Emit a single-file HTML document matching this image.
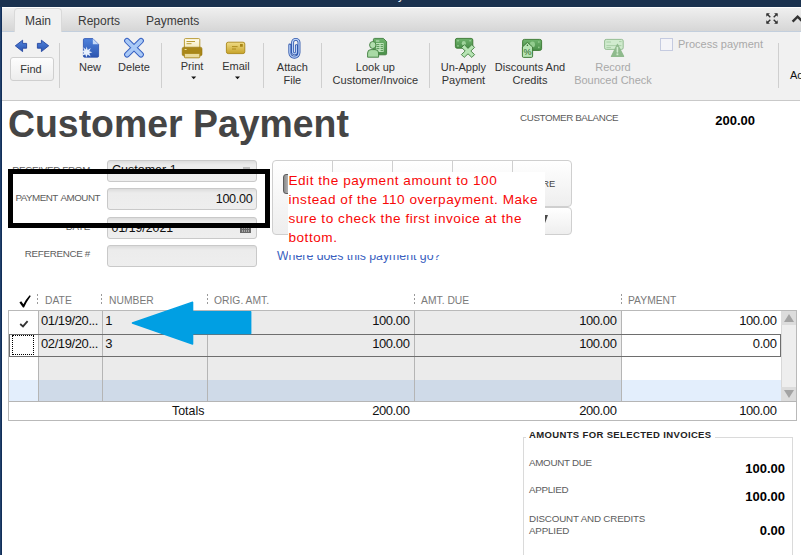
<!DOCTYPE html>
<html>
<head>
<meta charset="utf-8">
<title>Customer Payment</title>
<style>
html,body{margin:0;padding:0;}
body{width:801px;height:555px;overflow:hidden;background:#fff;position:relative;font-family:"Liberation Sans",sans-serif;color:#222;}
.abs{position:absolute;}
#topbar{left:0;top:0;width:801px;height:7px;background:#1b324f;}
#leftbar{left:0;top:7px;width:2px;height:548px;background:linear-gradient(90deg,#21406b 0,#21406b 1px,#112e58 1px);}
#tabbar{left:2px;top:7px;width:799px;height:23px;background:linear-gradient(#efefef,#d6d6d6);border-top:1px solid #fff;border-bottom:1px solid #c3cfdd;}
#tabmain{left:14px;top:8px;width:48px;height:24px;background:#f1f1f1;border:1px solid #d9d9d9;border-bottom:none;border-radius:4px 4px 0 0;box-sizing:border-box;}
.tab{top:14px;font-size:12px;color:#3a3a3a;line-height:14px;}
#toolbar{left:2px;top:32px;width:798px;height:68px;background:#f1f1f1;border-bottom:1px solid #c9c9c9;}
.tl{font-size:11px;line-height:13px;color:#333;text-align:center;white-space:nowrap;}
.tl.dis{color:#a9a9a9;}
.sep{width:1px;background:#cfcfcf;top:43px;height:45px;}
#find{left:10px;top:57px;width:44px;height:24px;box-sizing:border-box;border:1px solid #cfcfcf;border-radius:3px;background:linear-gradient(#fdfdfd,#ededed);font-size:11px;line-height:23px;text-align:center;color:#333;padding-right:2px;}
#title{left:7.6px;top:100.6px;font-size:38.8px;line-height:46px;font-weight:bold;color:#454545;white-space:nowrap;transform:scaleX(0.964);transform-origin:0 0;}
.lbl{font-size:9.8px;letter-spacing:-0.3px;color:#5c5c5c;line-height:11px;white-space:nowrap;}
.field{left:107px;width:150px;height:22px;box-sizing:border-box;border:1px solid #c9c9c9;border-radius:3px;background:linear-gradient(#dcdcdc 0,#ececec 4px,#eeeeee);font-size:12px;line-height:20px;color:#111;}
.pmb{box-sizing:border-box;border:1px solid #cfcfcf;background:linear-gradient(#ffffff,#eeeeee);}
#note{left:288px;top:172px;width:257px;height:83px;background:#fff;color:#f80808;font-size:13.6px;line-height:18.9px;letter-spacing:0.54px;white-space:nowrap;padding-left:0.4px;box-sizing:border-box;}
.th{top:295px;font-size:10.3px;letter-spacing:0.02px;line-height:12px;color:#7a7a7a;white-space:nowrap;}
.dots{top:294px;height:10px;width:1px;background:repeating-linear-gradient(#9a9a9a 0,#9a9a9a 2px,transparent 2px,transparent 4px);}
.cell{font-size:13px;line-height:15px;color:#111;white-space:nowrap;letter-spacing:-0.4px;}
.num{text-align:right;}
.bnum{font-size:13px;font-weight:bold;color:#000;text-align:right;white-space:nowrap;line-height:15px;transform-origin:100% 50%;}
</style>
</head>
<body>
<div class="abs" id="topbar"></div>
<div class="abs" style="left:398px;top:-11.3px;font-size:12px;line-height:12px;color:#e8eef6;">y</div>
<div class="abs" id="tabbar"></div>
<div class="abs" id="tabmain"></div>
<div class="abs tab" style="left:25px;">Main</div>
<div class="abs tab" style="left:78px;">Reports</div>
<div class="abs tab" style="left:146px;">Payments</div>
<div class="abs" id="toolbar"></div>
<div class="abs" id="leftbar"></div>

<!-- toolbar content -->
<div class="abs" id="find">Find</div>
<div class="abs sep" style="left:59px;"></div>
<div class="abs tl" style="left:70px;top:61px;width:40px;">New</div>
<div class="abs tl" style="left:114px;top:61px;width:40px;">Delete</div>
<div class="abs sep" style="left:161px;"></div>
<div class="abs tl" style="left:172px;top:60px;width:40px;">Print</div>
<div class="abs tl" style="left:216px;top:60px;width:40px;">Email</div>
<div class="abs sep" style="left:263px;"></div>
<div class="abs tl" style="left:267.4px;top:61px;width:50px;">Attach<br>File</div>
<div class="abs sep" style="left:321px;"></div>
<div class="abs tl" style="left:325.4px;top:61px;width:100px;">Look up<br>Customer/Invoice</div>
<div class="abs sep" style="left:429px;"></div>
<div class="abs tl" style="left:433.4px;top:61px;width:60px;">Un-Apply<br>Payment</div>
<div class="abs tl" style="left:490px;top:61px;width:80px;">Discounts And<br>Credits</div>
<div class="abs tl dis" style="left:568px;top:61px;width:90px;">Record<br>Bounced Check</div>
<div class="abs" style="left:660px;top:38px;width:11px;height:11px;border:1px solid #c5cbe0;background:#f4f4f8;box-sizing:content-box;"></div>
<div class="abs tl dis" style="left:678px;top:38px;font-size:11px;">Process payment</div>
<div class="abs sep" style="left:778px;"></div>
<div class="abs tl" style="left:790px;top:69px;color:#111;">Ac</div>

<!-- icons -->
<svg class="abs" style="left:0;top:0;" width="801" height="100" viewBox="0 0 801 100">
<defs>
<linearGradient id="gb" x1="0" y1="0" x2="0" y2="1"><stop offset="0" stop-color="#4f82dc"/><stop offset="1" stop-color="#2c55b0"/></linearGradient>
<linearGradient id="gg" x1="0" y1="0" x2="0" y2="1"><stop offset="0" stop-color="#6fb36d"/><stop offset="1" stop-color="#4a8f49"/></linearGradient>
<linearGradient id="gy" x1="0" y1="0" x2="0" y2="1"><stop offset="0" stop-color="#f0dc86"/><stop offset="1" stop-color="#c7a329"/></linearGradient>
<linearGradient id="gp" x1="0" y1="0" x2="0" y2="1"><stop offset="0" stop-color="#fffdf0"/><stop offset="1" stop-color="#f3e6b0"/></linearGradient>
</defs>
<!-- fullscreen + chevron -->
<g stroke="#333" stroke-width="1.4" fill="#333">
<path d="M770.3 17.2 L767 13.9 M773.7 17.2 L777 13.9 M770.3 19.8 L767 23.1 M773.7 19.8 L777 23.1" fill="none"/>
<path d="M766.3 13.2 h3.6 l-3.6 3.6z M777.7 13.2 h-3.6 l3.6 3.6z M766.3 23.8 h3.6 l-3.6 -3.6z M777.7 23.8 h-3.6 l3.6 -3.6z" stroke="none"/>
</g>
<path d="M792.6 21.6 L797.6 16.6 L802.6 21.6" fill="none" stroke="#333" stroke-width="2.4"/>
<!-- nav arrows -->
<path d="M15.3 45.8 L22.6 40.2 V43.4 H26.6 V48.2 H22.6 V51.6 Z" fill="url(#gb)" stroke="#2446a0" stroke-width="0.9" stroke-linejoin="round"/>
<path d="M48.7 45.8 L41.4 40.2 V43.4 H37.4 V48.2 H41.4 V51.6 Z" fill="url(#gb)" stroke="#2446a0" stroke-width="0.9" stroke-linejoin="round"/>
<!-- new -->
<path d="M84.6 38.6 H92.8 L98.6 44.4 V56 Q98.6 57.2 97.4 57.2 H84.6 Q83.4 57.2 83.4 56 V39.8 Q83.4 38.6 84.6 38.6 Z" fill="url(#gb)" stroke="#2a4fae" stroke-width="0.8"/>
<path d="M92.8 38.8 V44.2 H98.4 Z" fill="#c6daf8"/>
<path d="M86.6 46.4 L87.7 50 L90.8 48 L89.3 51.2 L92.4 52.2 L89.3 53.2 L90.6 56.6 L87.6 54.6 L86.2 57.6 L85.4 54.4 L82 55.6 L84 52.8 L81.4 51 L84.4 50.4 L83.2 47.2 L85.9 49.6 Z" fill="#e6effc"/>
<!-- delete -->
<path d="M127 40.8 L141 54.6 M141 40.8 L127 54.6" fill="none" stroke="#3761c2" stroke-width="5.8" stroke-linecap="round"/>
<path d="M127 40.8 L141 54.6 M141 40.8 L127 54.6" fill="none" stroke="#a9c9f6" stroke-width="3.8" stroke-linecap="round"/>
<!-- print -->
<rect x="184.4" y="38.6" width="15.4" height="11" rx="1" fill="url(#gp)" stroke="#b39222" stroke-width="0.9"/>
<path d="M186.5 41.5 h8.5 M186.5 43.7 h5" stroke="#b39222" stroke-width="0.9"/>
<rect x="182.2" y="47.2" width="19.8" height="8.6" rx="1.6" fill="#a98718" stroke="#98770f" stroke-width="0.6"/>
<rect x="184.6" y="49" width="2" height="0.9" fill="#f3e6b0"/>
<rect x="184.4" y="53.4" width="15.4" height="4.4" rx="0.8" fill="#eadb9c" stroke="#a98718" stroke-width="0.9"/>
<path d="M191.2 76.4 h5 l-2.5 2.8z" fill="#111"/>
<!-- email -->
<rect x="226.4" y="42.2" width="18.4" height="11.4" rx="1.8" fill="url(#gy)" stroke="#a98718" stroke-width="0.9"/>
<rect x="240" y="44" width="2.8" height="2.8" fill="#a98718"/>
<path d="M232 46.6 h5.6 M232 49 h4" stroke="#a98718" stroke-width="0.9"/>
<path d="M235 76.4 h5 l-2.5 2.8z" fill="#111"/>
<!-- attach -->
<path d="M289.8 45 V52.6 A4.6 4.6 0 0 0 299 52.6 V42.6 A3.2 3.2 0 0 0 292.6 42.6 V52 A1.9 1.9 0 0 0 296.4 52 V45.6" fill="none" stroke="#2e56ab" stroke-width="2.9" stroke-linecap="round"/>
<path d="M289.8 45 V52.6 A4.6 4.6 0 0 0 299 52.6 V42.6 A3.2 3.2 0 0 0 292.6 42.6 V52 A1.9 1.9 0 0 0 296.4 52 V45.6" fill="none" stroke="#b9d1f8" stroke-width="1.25" stroke-linecap="round"/>
<!-- look up -->
<path d="M374.6 38.4 H383.4 L386.6 41.6 V53.6 Q386.6 54.8 385.4 54.8 H374.6 Q373.4 54.8 373.4 53.6 V39.6 Q373.4 38.4 374.6 38.4 Z" fill="url(#gg)" stroke="#3f7d3d" stroke-width="0.9"/>
<rect x="376" y="43" width="7.6" height="9" fill="#bfe4bb"/>
<path d="M376.4 44.6 h3 M380.6 44.6 h2.4 M376.4 46.6 h3 M380.6 46.6 h2.4 M376.4 48.6 h3 M380.6 48.6 h2.4 M380.6 50.6 h2.4" stroke="#4a8f49" stroke-width="0.9"/>
<path d="M376 41 h3.4" stroke="#d6efd3" stroke-width="0.9"/>
<ellipse cx="372.8" cy="45" rx="3.2" ry="3.5" fill="#b2dfae" stroke="#3f7d3d" stroke-width="0.9"/>
<path d="M367.6 57.2 V53 Q367.6 49.6 371 49.6 H375 Q378.6 49.6 378.6 53 V57.2 Z" fill="#a9daa5" stroke="#3f7d3d" stroke-width="0.9" stroke-linejoin="round"/>
<!-- un-apply -->
<rect x="455.4" y="38.4" width="17.4" height="9.8" rx="1.6" fill="url(#gg)" stroke="#38762f" stroke-width="0.9"/>
<ellipse cx="463.8" cy="43.3" rx="2" ry="2.4" fill="#9fd39b"/>
<rect x="457.3" y="40" width="1.4" height="1.4" fill="#9fd39b"/><rect x="469.4" y="40" width="1.4" height="1.4" fill="#9fd39b"/><rect x="457.3" y="45.2" width="1.4" height="1.4" fill="#9fd39b"/>
<path d="M464.4 44.6 L468 48.4 L471.8 44.6 L474.6 47.4 L470.8 51 L474.6 54.6 L471.8 57.4 L468 53.8 L464.2 57.4 L461.4 54.6 L465.2 51 L461.6 47.4 Z" fill="#b7e4b4" stroke="#3f7d3d" stroke-width="0.9" stroke-linejoin="round"/>
<!-- discounts -->
<rect x="522.6" y="39.4" width="19" height="11" rx="1.8" fill="url(#gg)" stroke="#38762f" stroke-width="0.9"/>
<ellipse cx="532.4" cy="44.6" rx="2.6" ry="3" fill="#93cc8f"/>
<rect x="538" y="41.2" width="1.6" height="1.6" fill="#8cc688"/><rect x="538" y="46.6" width="1.6" height="1.6" fill="#8cc688"/>
<path d="M527.4 42.4 L532.6 47 V56.2 Q532.6 57.4 531.4 57.4 H523.6 Q522.4 57.4 522.4 56.2 V47 Z" fill="#b7e4b4" stroke="#35722f" stroke-width="0.9" stroke-linejoin="round"/>
<circle cx="527.4" cy="45.2" r="0.8" fill="#2f6a2b"/>
<text x="523.4" y="55.4" font-family="Liberation Sans, sans-serif" font-size="9" fill="#2a5f27">%</text>
<!-- record bounced -->
<rect x="604.6" y="39.4" width="18.6" height="10" rx="1.6" fill="#d0ebce" stroke="#8db88b" stroke-width="0.9"/>
<path d="M606.4 42 h4.6 M606.4 45.6 h15 M606.4 47.6 h4.6 M619 41.6 h2.6" stroke="#a5cda3" stroke-width="0.9"/>
<path d="M617.4 44.4 L623.6 56.4 H611.4 Z" fill="#8fba8d" stroke="#8fba8d" stroke-width="1.2" stroke-linejoin="round"/>
<path d="M617.4 47.6 V52" stroke="#d0ebce" stroke-width="1.6" stroke-linecap="round"/>
<rect x="616.5" y="53.4" width="1.8" height="1.8" fill="#d0ebce"/>
</svg>

<!-- title -->
<div class="abs" id="title">Customer Payment</div>
<div class="abs lbl" style="left:520px;top:112px;letter-spacing:-0.38px;">CUSTOMER BALANCE</div>
<div class="abs bnum" style="left:700px;top:113px;width:55px;">200.00</div>

<!-- form -->
<div class="abs lbl" style="left:0;width:90px;text-align:right;top:164px;">RECEIVED FROM</div>
<div class="abs field" style="top:160px;padding-left:4px;font-size:12.5px;line-height:18.6px;">Customer 1</div>
<div class="abs lbl" style="left:0;width:90px;text-align:right;top:221px;">DATE</div>
<div class="abs field" style="top:217px;padding-left:3.6px;font-size:12.3px;line-height:21px;">01/19/2021</div>
<div class="abs" style="left:240px;top:223px;width:11px;height:10px;background:#6a6a6a;"></div><div class="abs" style="left:241px;top:227px;width:9px;height:5px;background:repeating-linear-gradient(90deg,#6a6a6a 0,#6a6a6a 1px,#a8a8a8 1px,#a8a8a8 2px);"></div><div class="abs" style="left:240px;top:229px;width:11px;height:1px;background:#6a6a6a;"></div>
<div class="abs lbl" style="left:0;width:90px;text-align:right;top:248px;">REFERENCE #</div>
<div class="abs field" style="top:245px;"></div>

<!-- payment method buttons -->
<div class="abs pmb" style="left:272px;top:160px;width:61px;height:75px;border-radius:4px 0 0 4px;"></div>
<div class="abs pmb" style="left:332px;top:160px;width:61px;height:48px;"></div>
<div class="abs pmb" style="left:392px;top:160px;width:61px;height:48px;"></div>
<div class="abs pmb" style="left:452px;top:160px;width:61px;height:48px;"></div>
<div class="abs pmb" style="left:512px;top:160px;width:60px;height:47px;border-radius:0 4px 4px 0;"></div>
<div class="abs pmb" style="left:332px;top:207px;width:240px;height:28px;border-radius:0 4px 4px 0;"></div>
<div class="abs" style="left:283px;top:174px;width:9px;height:19.5px;box-sizing:border-box;border:1px solid #5e5e5e;border-radius:3px;background:linear-gradient(90deg,#8a8a8a,#d0d0d0);"></div>
<div class="abs" style="left:527.2px;top:177.5px;font-size:9.4px;color:#444;line-height:11px;white-space:nowrap;">MORE</div>
<div class="abs" style="left:540.2px;top:214.5px;width:0;height:0;border-left:4.4px solid transparent;border-right:4.4px solid transparent;border-top:11.5px solid #4a4a4a;"></div>
<div class="abs" style="left:277px;top:248.5px;font-size:12.3px;line-height:14px;color:#3a5fc0;white-space:nowrap;">Where does this payment go?</div>

<!-- black highlight rectangle -->
<div class="abs" style="left:243px;top:167.4px;width:7px;height:2px;background:#bdbdbd;"></div>
<div class="abs" style="left:8px;top:169px;width:262px;height:58.5px;box-sizing:border-box;border:5px solid #000;"></div>
<div class="abs lbl" style="left:0;width:100px;text-align:right;top:192px;letter-spacing:-0.5px;word-spacing:1.2px;">PAYMENT AMOUNT</div>
<div class="abs field num" style="top:188px;padding-right:3.6px;font-size:12.6px;letter-spacing:-0.3px;">100.00</div>

<!-- note -->
<div class="abs" id="note">Edit the payment amount to 100<br>instead of the 110 overpayment. Make<br>sure to check the first invoice at the<br>bottom.</div>

<!-- table header -->
<svg class="abs" style="left:15px;top:290px;" width="20" height="20" viewBox="15 290 20 20"><path d="M19.4 302.6 L21.2 301.2 L23.4 304.2 Q26 299.2 29.6 295.2 L30.8 296 Q26.8 301.4 24 307.6 L23 307.6 Z" fill="#000"/></svg>
<div class="abs dots" style="left:37px;"></div>
<div class="abs th" style="left:45px;">DATE</div>
<div class="abs dots" style="left:101px;"></div>
<div class="abs th" style="left:109px;">NUMBER</div>
<div class="abs dots" style="left:207px;"></div>
<div class="abs th" style="left:214px;">ORIG. AMT.</div>
<div class="abs dots" style="left:414px;"></div>
<div class="abs th" style="left:421px;">AMT. DUE</div>
<div class="abs dots" style="left:621px;"></div>
<div class="abs th" style="left:628px;">PAYMENT</div>

<!-- table body -->
<div class="abs" style="left:8px;top:310px;width:789px;height:111px;box-sizing:border-box;border:1px solid #b9b9b9;background:#fff;"></div>
<div class="abs" style="left:38px;top:311px;width:583px;height:69px;background:#ebebeb;"></div>
<div class="abs" style="left:9px;top:380px;width:772px;height:21px;background:#e3eefc;"></div>
<div class="abs" style="left:38px;top:380px;width:583px;height:21px;background:#cfdae8;"></div>
<div class="abs" style="left:38px;top:311px;width:1px;height:90px;background:#b5b5b5;"></div>
<div class="abs" style="left:102px;top:311px;width:1px;height:90px;background:#b5b5b5;"></div>
<div class="abs" style="left:207px;top:311px;width:1px;height:90px;background:#b5b5b5;"></div>
<div class="abs" style="left:414px;top:311px;width:1px;height:90px;background:#b5b5b5;"></div>
<div class="abs" style="left:621px;top:311px;width:1px;height:90px;background:#b5b5b5;"></div>
<div class="abs" style="left:9px;top:401px;width:788px;height:1px;background:#b5b5b5;"></div>
<!-- scrollbar -->
<div class="abs" style="left:781px;top:311px;width:15px;height:90px;background:#eeeeee;border-left:1px solid #d8d8d8;box-sizing:border-box;"></div>
<div class="abs" style="left:781px;top:311px;width:15px;height:14px;background:#dcdcdc;"></div>
<div class="abs" style="left:781px;top:387px;width:15px;height:14px;background:#dcdcdc;"></div>
<div class="abs" style="left:784px;top:314px;width:0;height:0;border-left:5px solid transparent;border-right:5px solid transparent;border-bottom:8px solid #a3a3a3;"></div>
<div class="abs" style="left:784px;top:390px;width:0;height:0;border-left:5px solid transparent;border-right:5px solid transparent;border-top:8px solid #a3a3a3;"></div>
<!-- row2 selection -->
<div class="abs" style="left:9px;top:334px;width:772px;height:23px;box-sizing:border-box;border:1px solid #6e6e6e;"></div>
<div class="abs" style="left:621px;top:335px;width:159px;height:21px;background:#fff;border-left:1px solid #b5b5b5;box-sizing:border-box;"></div>
<div class="abs" style="left:12px;top:335px;width:22px;height:20px;box-sizing:border-box;border:1px dotted #000;background:#fff;"></div>
<!-- row text -->
<svg class="abs" style="left:15px;top:315px;" width="20" height="16" viewBox="15 315 20 16"><path d="M20.2 324 L23 326.4 L27.6 321.2" fill="none" stroke="#333" stroke-width="1.8"/></svg>
<div class="abs cell" style="left:41px;top:313px;">01/19/20...</div>
<div class="abs cell" style="left:105.3px;top:313px;">1</div>
<div class="abs cell num" style="left:300px;width:109.5px;top:313px;">100.00</div>
<div class="abs cell num" style="left:507px;width:109.5px;top:313px;">100.00</div>
<div class="abs cell num" style="left:667px;width:109.5px;top:313px;">100.00</div>
<div class="abs cell" style="left:41px;top:336px;">02/19/20...</div>
<div class="abs cell" style="left:105.3px;top:336px;">3</div>
<div class="abs cell num" style="left:300px;width:109.5px;top:336px;">100.00</div>
<div class="abs cell num" style="left:507px;width:109.5px;top:336px;">100.00</div>
<div class="abs cell num" style="left:667px;width:109.5px;top:336px;">0.00</div>
<div class="abs cell" style="left:172px;top:404px;font-size:12.4px;letter-spacing:0;">Totals</div>
<div class="abs cell num" style="left:300px;width:109.5px;top:403px;">200.00</div>
<div class="abs cell num" style="left:507px;width:109.5px;top:403px;">200.00</div>
<div class="abs cell num" style="left:667px;width:109.5px;top:403px;">100.00</div>

<!-- arrow -->
<svg class="abs" style="left:125px;top:296px;" width="135" height="55" viewBox="125 296 135 55">
<polygon points="132.4,323 192.6,302.2 192.6,311.7 250.7,311.7 250.7,333.6 192.6,333.6 192.6,344" fill="#009fe3" stroke="#009fe3" stroke-width="1.4" stroke-linejoin="round"/>
</svg>

<!-- amounts box -->
<div class="abs" style="left:523px;top:437px;width:270px;height:130px;box-sizing:border-box;border:1px solid #dadada;"></div>
<div class="abs" style="left:526px;top:429px;padding:0 3px;background:#fff;font-size:9.5px;line-height:12px;font-weight:bold;color:#222;white-space:nowrap;letter-spacing:0.36px;">AMOUNTS FOR SELECTED INVOICES</div>
<div class="abs lbl" style="left:529px;top:457.3px;">AMOUNT DUE</div>
<div class="abs bnum" style="left:720px;top:461px;width:65px;">100.00</div>
<div class="abs lbl" style="left:529px;top:484.3px;">APPLIED</div>
<div class="abs bnum" style="left:720px;top:489px;width:65px;">100.00</div>
<div class="abs lbl" style="left:529px;top:512.6px;line-height:12px;letter-spacing:-0.17px;">DISCOUNT AND CREDITS<br>APPLIED</div>
<div class="abs bnum" style="left:720px;top:523px;width:65px;">0.00</div>
</body>
</html>
